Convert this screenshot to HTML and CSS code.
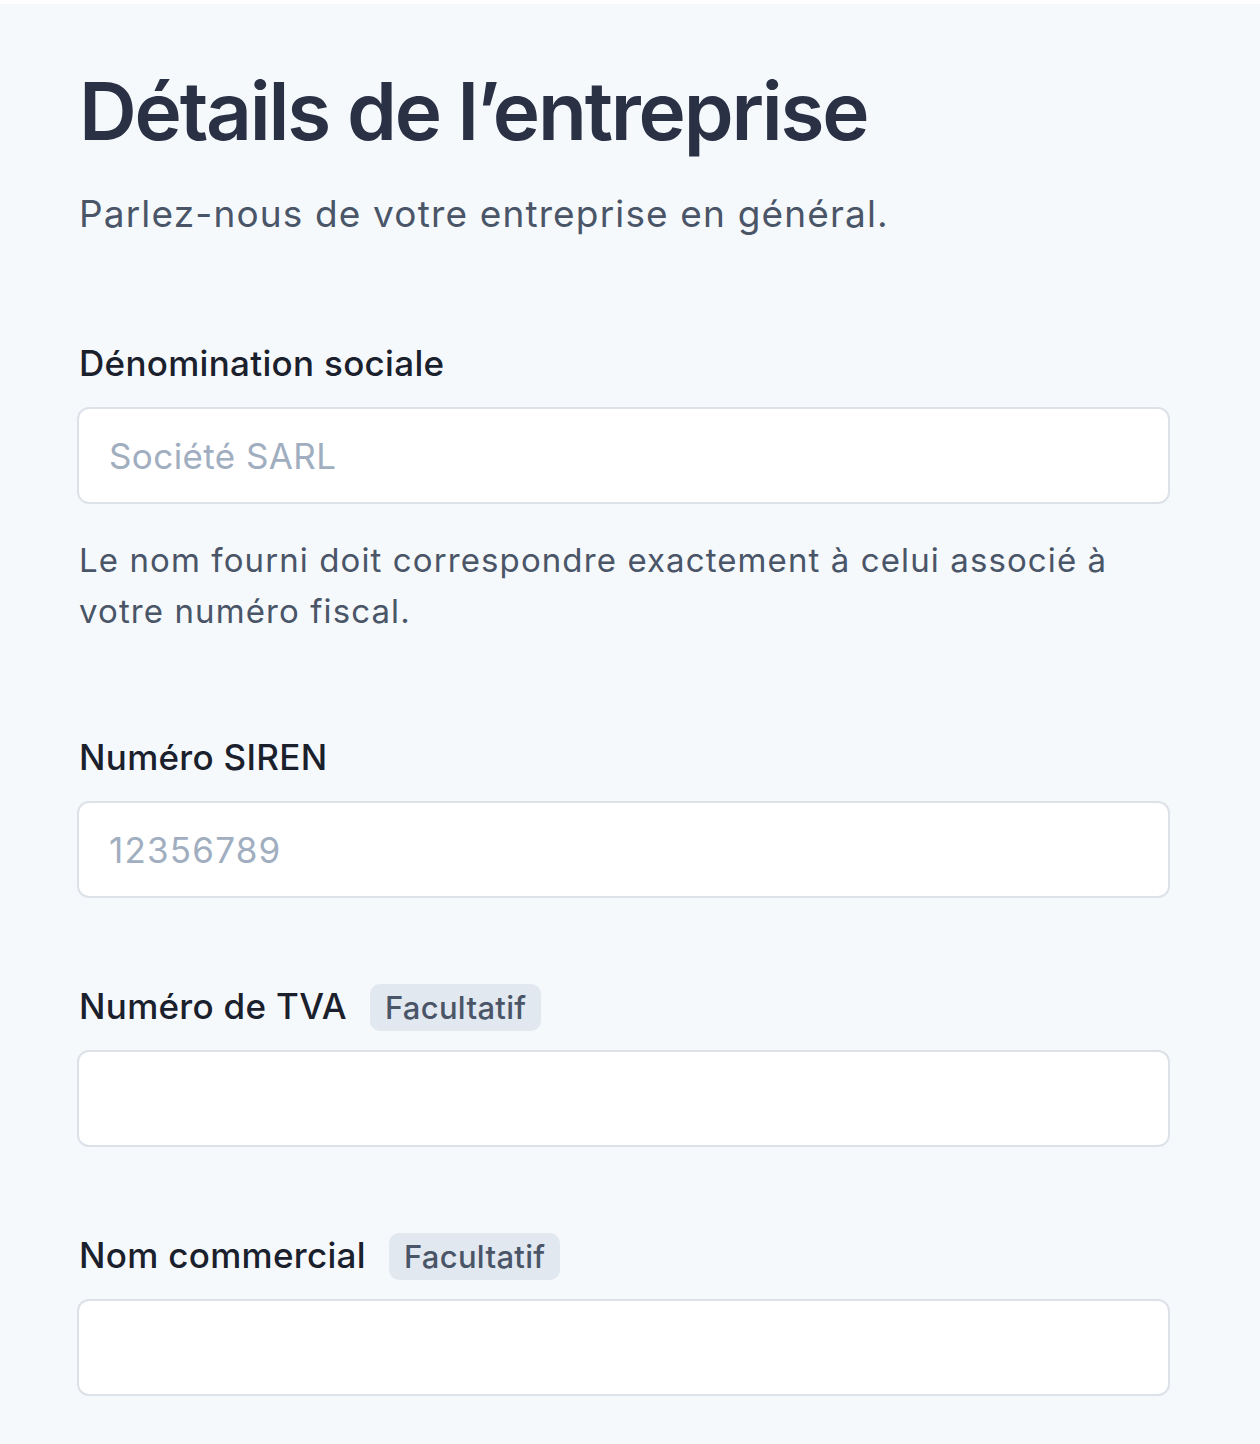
FILE: index.html
```html
<!DOCTYPE html>
<html lang="fr">
<head>
<meta charset="utf-8">
<title>Détails de l’entreprise</title>
<link rel="stylesheet" href="styles.css">
</head>
<body>
<main class="page">
  <h1 class="title">Détails de l’entreprise</h1>
  <p class="subtitle">Parlez-nous de votre entreprise en général.</p>

  <div class="field field-first">
    <div class="label-row"><label class="label" for="den">Dénomination sociale</label></div>
    <input class="input" id="den" type="text" placeholder="Société SARL">
    <p class="help">Le nom fourni doit correspondre exactement à celui associé à votre numéro fiscal.</p>
  </div>

  <div class="field field-after-help">
    <div class="label-row"><label class="label" for="siren">Numéro SIREN</label></div>
    <input class="input input-num" id="siren" type="text" placeholder="12356789">
  </div>

  <div class="field">
    <div class="label-row"><label class="label" for="tva">Numéro de TVA</label><span class="badge">Facultatif</span></div>
    <input class="input" id="tva" type="text">
  </div>

  <div class="field">
    <div class="label-row"><label class="label" for="nom">Nom commercial</label><span class="badge">Facultatif</span></div>
    <input class="input" id="nom" type="text">
  </div>
</main>
</body>
</html>
```

FILE: styles.css
```css
html, body {
  margin: 0;
  padding: 0;
}

body {
  background: #ffffff;
  font-family: Inter, "Noto Sans", "Liberation Sans", sans-serif;
}

.page {
  margin-top: 4px;
  min-height: 1440px;
  box-sizing: border-box;
  background: #f5f9fc;
  padding: 59px 90px 40px 77px;
}

.title {
  margin: 0;
  font-size: 80px;
  line-height: 96px;
  font-weight: 600;
  color: #2a3145;
  letter-spacing: -2.2px;
  padding-left: 2px;
}

.subtitle {
  margin: 33px 0 0;
  font-size: 37px;
  line-height: 44px;
  font-weight: 400;
  letter-spacing: 1.15px;
  color: #4a5568;
  padding-left: 2px;
}

.field {
  display: flex;
  flex-direction: column;
  margin-top: 84px;
}

.field-first {
  margin-top: 103px;
}

.field-after-help {
  margin-top: 96px;
}

.label-row {
  display: flex;
  align-items: center;
  gap: 23px;
  height: 47px;
  margin-bottom: 21px;
  padding-left: 2px;
}

.label {
  font-size: 35px;
  line-height: 40px;
  font-weight: 500;
  letter-spacing: 0.3px;
  color: #1a202c;
}

.badge {
  display: inline-flex;
  align-items: center;
  height: 47px;
  margin-top: 3px;
  padding: 0 15px;
  border-radius: 10px;
  background: #e2e8f0;
  color: #4a5568;
  font-size: 31px;
  font-weight: 500;
  letter-spacing: 0.3px;
}

.input {
  display: block;
  width: 100%;
  height: 97px;
  box-sizing: border-box;
  border: 2px solid #dde2e8;
  border-radius: 12px;
  background: #ffffff;
  padding: 0 30px;
  font-family: inherit;
  font-size: 35px;
  letter-spacing: 0.4px;
  color: #1a202c;
  outline: none;
}

.input-num {
  letter-spacing: 1.2px;
}

.input::placeholder {
  color: #a0aec0;
  opacity: 1;
}

.help {
  margin: 31px 0 0;
  font-size: 33px;
  line-height: 51px;
  letter-spacing: 1.1px;
  color: #4a5568;
  padding-left: 2px;
}
```
